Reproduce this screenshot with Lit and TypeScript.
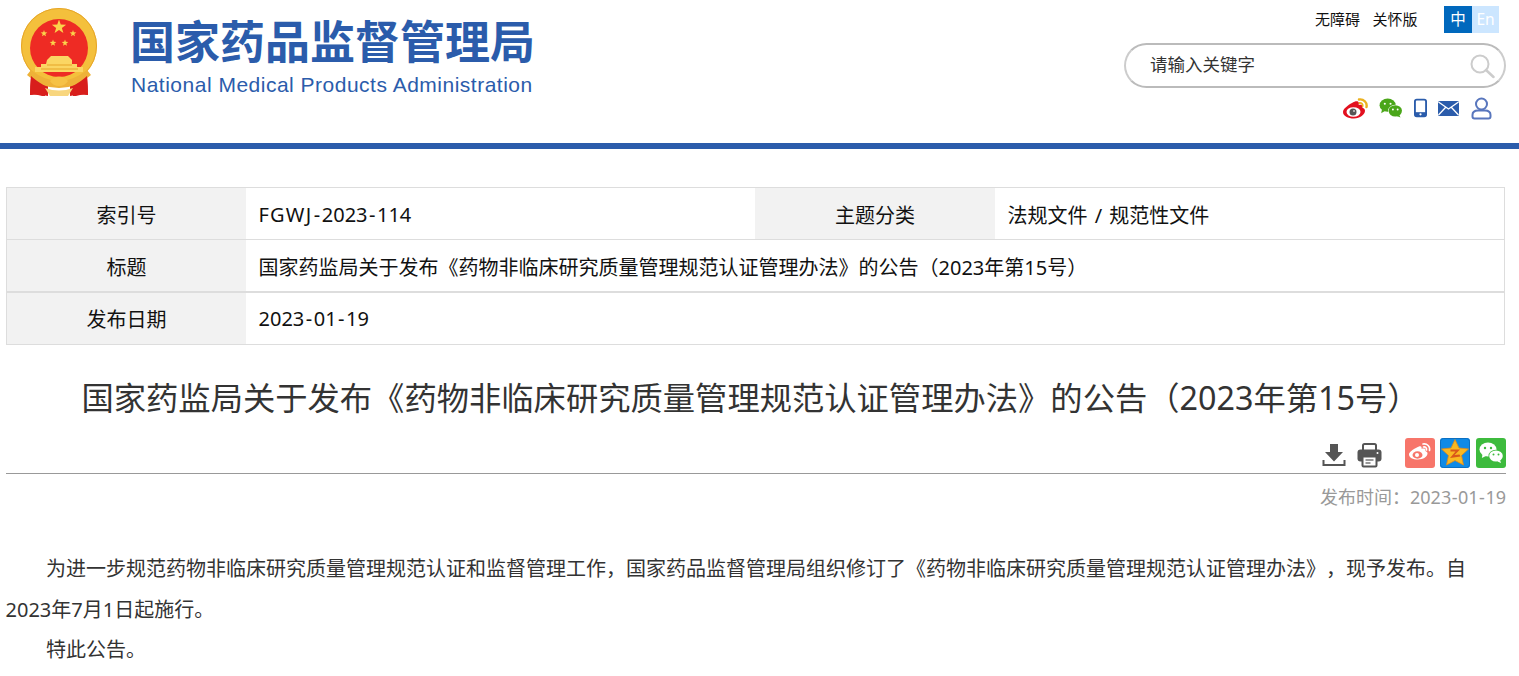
import { LitElement, html, css, svg } from "lit";
import { customElement } from "lit/decorators.js";

const star = (cx: number, cy: number, r: number, fill = "#fbd34b") => {
  const pts: string[] = [];
  for (let i = 0; i < 10; i++) {
    const a = -Math.PI / 2 + (i * Math.PI) / 5;
    const rr = i % 2 ? r * 0.4 : r;
    pts.push(`${(cx + rr * Math.cos(a)).toFixed(2)},${(cy + rr * Math.sin(a)).toFixed(2)}`);
  }
  return svg`<polygon points=${pts.join(" ")} fill=${fill} />`;
};

const date = html`2023<span class="hy">-</span>01<span class="hy">-</span>19`;

@customElement("app-root")
export class AppRoot extends LitElement {
  static styles = css`
    :host {
      display: block;
      font-family: "Noto Sans", "Noto Sans CJK SC", sans-serif;
      text-spacing-trim: space-all;
      color: #333;
      background: #fff;
      width: 1519px;
      height: 676px;
      overflow: hidden;
    }
    .header {
      height: 143px;
      display: flex;
      justify-content: space-between;
      border-bottom: 6px solid #2b5cab;
    }
    .brand {
      display: flex;
      padding: 8px 0 0 21px;
      gap: 32px;
      align-items: flex-start;
    }
    .emblem { width: 77px; height: 89px; display: block; }
    .brand-text { display: flex; flex-direction: column; color: #2b5cab; padding-top: 6px; }
    .brand-cn {
      font-family: "Noto Sans CJK SC", sans-serif;
      font-weight: 700;
      font-size: 45px;
      line-height: 52px;
      white-space: nowrap;
    }
    .brand-en {
      font-family: "Liberation Sans", sans-serif;
      font-size: 21px;
      line-height: 24px;
      margin-top: 7px;
      padding-left: 1px;
      letter-spacing: 0.5px;
      white-space: nowrap;
    }
    .tools {
      width: 395px;
      display: flex;
      flex-direction: column;
      align-items: flex-end;
    }
    .top {
      display: flex;
      align-items: center;
      margin: 6px 20px 0 0;
      font-size: 15px;
      color: #111;
      height: 27px;
    }
    .top span { padding-bottom: 3px; }
    .top span + span { margin-left: 12.6px; }
    .lang { display: flex; margin-left: 26.5px; }
    .lang b {
      font-weight: 400;
      width: 28px;
      height: 27px;
      line-height: 27px;
      text-align: center;
      font-size: 15.5px;
      color: #fff;
      background: #0068bd;
    }
    .lang b + b { width: 27px; background: #cce6ff; }
    .search {
      box-sizing: border-box;
      width: 382px;
      height: 45px;
      margin: 10px 13px 0 0;
      border: 2px solid #ccc;
      border-top-color: #bbb;
      border-bottom-color: #bbb;
      border-radius: 23px;
      display: flex;
      align-items: center;
      justify-content: space-between;
      padding: 0 9px 4px 24px;
      font-size: 17.5px;
      color: #333;
    }
    .search svg { width: 26px; height: 26px; margin-top: 4px; }
    .social {
      display: flex;
      align-items: center;
      margin: 7px 27px 0 0;
      height: 26px;
    }
    .social svg { display: block; }
    .meta {
      box-sizing: border-box;
      margin: 38px 14px 0 6px;
      width: 1499px;
      border: 1px solid #ddd;
      color: #111;
      font-size: 20px;
    }
    .row { display: flex; height: 51px; }
    .row + .row { border-top: 1px solid #ddd; }
    .row.thick { border-top-width: 2px; }
    .k, .v { display: flex; align-items: center; white-space: nowrap; box-sizing: border-box; padding-top: 2px; }
    .k { width: 239px; justify-content: center; background: #f2f2f2; flex: none; }
    .k.wide { width: 240px; }
    .v { padding-left: 12.5px; flex: 1; min-width: 0; }
    .v.half { flex: none; width: 509px; }
    .v.cat { word-spacing: 2px; }
    .row.thick .k, .row.thick .v { padding-top: 0; padding-bottom: 1px; }
    .hy { padding: 0 1.5px; }
    .ls { letter-spacing: 1.2px; }
    .title {
      margin: 32px 0 0;
      height: 40px;
      line-height: 40px;
      text-align: center;
      font-size: 32.3px;
      font-weight: 400;
      color: #333;
      width: 1501px;
      white-space: nowrap;
    }
    .actions {
      box-sizing: border-box;
      margin: 21px 13px 0 6px;
      height: 36px;
      border-bottom: 1px solid #999;
      display: flex;
      justify-content: flex-end;
      align-items: flex-start;
    }
    .actions svg { display: block; }
    .pub {
      margin: 9px 13px 0 0;
      text-align: right;
      font-size: 18px;
      line-height: 28px;
      color: #999;
    }
    .pub .hy { padding: 0 0.5px; }
    .body {
      margin: 38px 14px 0 5.5px;
      font-size: 20px;
      line-height: 40.5px;
      color: #333;
    }
    .body p { margin: 0; text-indent: 40.5px; }
  `;

  emblem() {
    return html`<svg class="emblem" viewBox="21 8 77 89">
      <path d="M31 76 q-1 10 -1 19 q6 -2 12 0 l6 1 v-12z" fill="#d81e1c" />
      <path d="M87 76 q1 10 1 19 q-6 -2 -12 0 l-6 1 v-12z" fill="#d81e1c" />
      <circle cx="59" cy="46" r="38" fill="#f4c03c" />
      <circle cx="59" cy="46" r="37.500" fill="none" stroke="#e6a528" stroke-width="1" />
      <circle cx="59" cy="48" r="29" fill="#ee2b24" />
      ${star(59, 27, 7.5)} ${star(44, 33.5, 3.5)} ${star(73, 33.5, 3.5)} ${star(53, 43, 3.5)} ${star(65, 43, 3.5)}
      <path d="M47 60 l4-4 h17 l4 4 v4 h5 v3 h6 v5 h-48 v-5 h6 v-3 h5z" fill="#fbd663" />
      <path d="M47 65 h25 M41 69 h37" stroke="#e6a528" stroke-width="1" />
      <path d="M31 70 q28 22 56 0 l4 5 q-14 13 -32 13 t-32 -13z" fill="#eeb238" />
      <path d="M31 76 q4 4 14 10 v10 h-3 q-6 -2 -12 -1z M87 76 q-4 4 -14 10 v10 h3 q6 -2 12 -1z" fill="#d81e1c" />
      <path d="M50 81 q9 -9 18 0 q-3 5 -9 5 t-9 -5z" fill="#f6c246" />
      <path d="M45 88 q14 5 28 0 l-5 8 h-18z" fill="#f8d67e" />
    </svg>`;
  }

  social() {
    return html`<div class="social">
      <svg width="25" height="21" viewBox="0 0 25 21" style="margin-right:11px">
        <path d="M9 5c3-2 6-2.500 6.800-.5.300 1 0 2-.2 2.500 2-.6 4.200-.2 4 1.700 0 .6-.2 1.100-.2 1.100 1.800.5 2.600 1.500 2.600 3 0 3.700-5 7.700-11 7.700S0 18 0 14C0 11 5 7 9 5z" fill="#e2101f"/>
        <ellipse cx="10.500" cy="14" rx="7" ry="4.800" fill="#fff"/>
        <circle cx="10" cy="14" r="3.500" fill="#555"/>
        <circle cx="11" cy="13" r="1" fill="#ccc"/>
        <path d="M16 1.500c4.500-.8 8.500 3 7.500 7.500" fill="none" stroke="#ebb120" stroke-width="2.400" stroke-linecap="round"/>
        <path d="M16.500 5c2-.3 3.500 1.200 3.200 3" fill="none" stroke="#ebb120" stroke-width="1.800" stroke-linecap="round"/>
      </svg>
      <svg width="24" height="20" viewBox="0 0 25 21" style="margin-right:11px">
        <ellipse cx="9" cy="7.500" rx="8.500" ry="7" fill="#4aa619"/>
        <path d="M3 12l-.8 4 4.300-2.500z" fill="#4aa619"/>
        <circle cx="6" cy="6" r="1.100" fill="#fff"/><circle cx="12" cy="6" r="1.100" fill="#fff"/>
        <ellipse cx="17" cy="13.500" rx="7.500" ry="6.500" fill="#fff"/>
        <ellipse cx="17" cy="13.500" rx="7" ry="6" fill="#4aa619"/>
        <path d="M21 17.500l1.500 3-4-1.500z" fill="#4aa619"/>
        <circle cx="14.500" cy="12" r="1" fill="#fff"/><circle cx="19.500" cy="12" r="1" fill="#fff"/>
      </svg>
      <svg width="13" height="20" viewBox="0 0 14 20" style="margin-right:11px">
        <rect x="1" y="1" width="12" height="18" rx="2" fill="none" stroke="#2b5cab" stroke-width="2"/>
        <rect x="1" y="14.500" width="12" height="4.500" fill="#2b5cab"/>
        <circle cx="7" cy="16.800" r="1.200" fill="#fff"/>
      </svg>
      <svg width="21" height="15" viewBox="0 0 21 15" style="margin-right:12px">
        <rect width="21" height="15" rx="1.500" fill="#2b5cab"/>
        <path d="M0.500 1l10 7 10-7M0.500 14l7-7.500M20.500 14l-7-7.500" fill="none" stroke="#fff" stroke-width="1.300"/>
      </svg>
      <svg width="21" height="23" viewBox="0 0 21 23">
        <circle cx="10.500" cy="7" r="5.500" fill="none" stroke="#5876bd" stroke-width="2"/>
        <path d="M7 13.500h7q5.500 0 5.500 4.500v1.500q0 2-2 2H3.500q-2 0-2-2V18q0-4.500 5.500-4.500z" fill="none" stroke="#5876bd" stroke-width="2"/>
      </svg>
    </div>`;
  }

  actions() {
    return html`<div class="actions">
      <svg width="24" height="24" viewBox="0 0 24 24" style="margin:5px 11px 0 0">
        <path d="M8 1h8v8h5l-9 9.500L3 9h5z" fill="#555"/>
        <path d="M1.500 17v5h21v-5" fill="none" stroke="#555" stroke-width="2"/>
      </svg>
      <svg width="25" height="25" viewBox="0 0 25 25" style="margin:5px 23px 0 0">
        <path d="M6 7V2.500q0-1.500 1.500-1.500h10q1.500 0 1.500 1.500V7" fill="none" stroke="#555" stroke-width="2"/>
        <rect x="0.500" y="6.500" width="24" height="12" rx="3" fill="#555"/>
        <circle cx="20.500" cy="10" r="1" fill="#fff"/>
        <rect x="5.500" y="13.500" width="14" height="10" rx="1" fill="#fff" stroke="#555" stroke-width="2"/>
        <path d="M8.500 17h8M8.500 20h5" stroke="#777" stroke-width="1.300"/>
      </svg>
      <svg width="30" height="30" viewBox="0 0 30 30" style="margin-right:5px">
        <rect width="30" height="30" rx="3" fill="#f7756a"/>
        <path d="M11 10c3-2 5-2.500 5.500-1 .2.800 0 1.500 0 1.800 2-.5 4-.3 4 1.300 0 .6-.2 1-.2 1 1.300.5 2.200 1.200 2.200 2.400 0 3-4.300 6-9.500 6S4 19.500 4 16.500C4 14 8 11.500 11 10z" fill="#fff"/>
        <ellipse cx="12.500" cy="17" rx="5" ry="3.700" fill="#f7756a"/>
        <circle cx="12" cy="17" r="2" fill="#fff"/>
        <path d="M18 6c4-.8 7.500 2.500 6.500 6.500M18.500 9c2-.4 3.500 1 3 3" fill="none" stroke="#fff" stroke-width="1.600" stroke-linecap="round"/>
      </svg>
      <svg width="30" height="30" viewBox="0 0 30 30" style="margin-right:6px">
        <rect width="30" height="30" rx="3" fill="#0f8ae6"/>
        <rect x="0.500" y="0.500" width="29" height="29" rx="3" fill="none" stroke="#0c6fc0"/>
        <path d="M15 1.500l4 8.500 9.500 1-7 6.500 2 9.500L15 22.500l-8.500 4.500 2-9.500-7-6.500 9.500-1z" fill="#f9b822" stroke="#e08a1b" stroke-width="0.800"/>
        <path d="M10.500 11.500h9.500l-5.500 5.500 5-.5 1 2-10.500 1.500 5.500-6.500h-5z" fill="#d9571a"/>
      </svg>
      <svg width="30" height="30" viewBox="0 0 30 30">
        <rect width="30" height="30" rx="3" fill="#3dbb3d"/>
        <ellipse cx="12" cy="11.500" rx="8.500" ry="7" fill="#fff"/>
        <path d="M6.500 16l-.6 4 4-2z" fill="#fff"/>
        <circle cx="9" cy="10" r="1.200" fill="#3dbb3d"/><circle cx="15" cy="10" r="1.200" fill="#3dbb3d"/>
        <ellipse cx="20" cy="18" rx="7.500" ry="6.200" fill="#3dbb3d"/>
        <ellipse cx="20" cy="18" rx="6.800" ry="5.500" fill="#fff"/>
        <path d="M24 22l1 3-3.500-1.500z" fill="#fff"/>
        <circle cx="17.500" cy="16.500" r="1" fill="#3dbb3d"/><circle cx="22.500" cy="16.500" r="1" fill="#3dbb3d"/>
      </svg>
    </div>`;
  }

  render() {
    return html`
      <div class="header">
        <div class="brand">
          ${this.emblem()}
          <div class="brand-text">
            <div class="brand-cn">国家药品监督管理局</div>
            <div class="brand-en">National Medical Products Administration</div>
          </div>
        </div>
        <div class="tools">
          <div class="top">
            <span>无障碍</span><span>关怀版</span>
            <div class="lang"><b>中</b><b>En</b></div>
          </div>
          <div class="search">
            <span>请输入关键字</span>
            <svg viewBox="0 0 26 26">
              <circle cx="11" cy="11" r="8.500" fill="none" stroke="#ccc" stroke-width="2"/>
              <path d="M17 17l7.500 7" stroke="#ccc" stroke-width="2.500" stroke-linecap="round"/>
            </svg>
          </div>
          ${this.social()}
        </div>
      </div>
      <div class="meta">
        <div class="row"><div class="k">索引号</div><div class="v half"><span><span class="ls">FGWJ</span><span class="hy">-</span>2023<span class="hy">-</span>114</span></div><div class="k wide">主题分类</div><div class="v cat">法规文件 / 规范性文件</div></div>
        <div class="row"><div class="k">标题</div><div class="v">国家药监局关于发布《药物非临床研究质量管理规范认证管理办法》的公告（2023年第15号）</div></div>
        <div class="row thick"><div class="k">发布日期</div><div class="v"><span>${date}</span></div></div>
      </div>
      <h1 class="title">国家药监局关于发布《药物非临床研究质量管理规范认证管理办法》的公告（2023年第15号）</h1>
      ${this.actions()}
      <div class="pub">发布时间：${date}</div>
      <div class="body">
        <p>为进一步规范药物非临床研究质量管理规范认证和监督管理工作，国家药品监督管理局组织修订了《药物非临床研究质量管理规范认证管理办法》，现予发布。自2023年7月1日起施行。</p>
        <p>特此公告。</p>
      </div>
    `;
  }
}
